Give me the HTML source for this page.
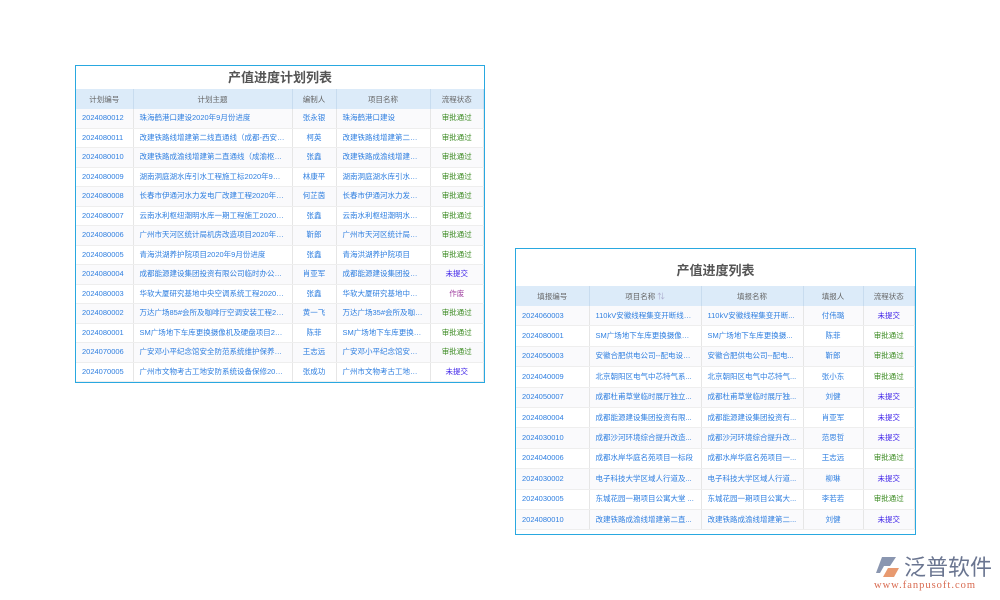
<!DOCTYPE html>
<html><head><meta charset="utf-8"><style>
body{margin:0;width:1000px;height:600px;background:#fff;position:relative;font-family:"Liberation Sans","Noto Sans CJK SC",sans-serif;overflow:hidden}
.t{position:absolute;border:1px solid #29a8e0;background:#fff;box-sizing:border-box;overflow:hidden}
.t h1{margin:0;text-align:center;font-size:13px;color:#555;font-weight:bold}
table{border-collapse:collapse;width:100%;table-layout:fixed}
th{background:#dcebf9;color:#666;font-weight:normal;font-size:7.5px;border-right:1px solid #c8dcef;padding:0}
td{font-size:7.5px;color:#2f7fe0;white-space:nowrap;overflow:hidden;text-overflow:ellipsis;border-right:1px solid #e6e6e6;border-bottom:1px solid #eee;padding:0 6px;line-height:10px}
tr:nth-child(even) td{background:#fafafc}
.a td{height:18.5px}
.b td{height:19.4px}
.c{text-align:center}
.g{color:#3a8a20;text-align:center}.p{color:#3a1ee8;text-align:center}.z{color:#a040a0;text-align:center}
</style></head><body>
<div class="t" style="left:75px;top:65px;width:410px;height:318px">
<h1 style="height:23px;line-height:23px">产值进度计划列表</h1>
<table class="a"><colgroup><col style="width:57px"><col style="width:159px"><col style="width:44px"><col style="width:94px"><col></colgroup>
<tr style="height:20px"><th>计划编号</th><th>计划主题</th><th>编制人</th><th>项目名称</th><th>流程状态</th></tr>
<tr><td>2024080012</td><td>珠海鹤港口建设2020年9月份进度</td><td class="c">张永银</td><td>珠海鹤港口建设</td><td class="g">审批通过</td></tr>
<tr><td>2024080011</td><td>改建铁路线增建第二线直通线（成都-西安）电...</td><td class="c">柯英</td><td>改建铁路线增建第二线直...</td><td class="g">审批通过</td></tr>
<tr><td>2024080010</td><td>改建铁路成渝线增建第二直通线（成渝枢纽）...</td><td class="c">张鑫</td><td>改建铁路成渝线增建第二...</td><td class="g">审批通过</td></tr>
<tr><td>2024080009</td><td>湖南洞庭湖水库引水工程施工标2020年9月份...</td><td class="c">林康平</td><td>湖南洞庭湖水库引水工程...</td><td class="g">审批通过</td></tr>
<tr><td>2024080008</td><td>长春市伊通河水力发电厂改建工程2020年8月...</td><td class="c">何芷茵</td><td>长春市伊通河水力发电厂...</td><td class="g">审批通过</td></tr>
<tr><td>2024080007</td><td>云南水利枢纽潮明水库一期工程施工2020年8...</td><td class="c">张鑫</td><td>云南水利枢纽潮明水库一...</td><td class="g">审批通过</td></tr>
<tr><td>2024080006</td><td>广州市天河区统计局机房改造项目2020年9月...</td><td class="c">靳郎</td><td>广州市天河区统计局机房...</td><td class="g">审批通过</td></tr>
<tr><td>2024080005</td><td>青海洪湖养护院项目2020年9月份进度</td><td class="c">张鑫</td><td>青海洪湖养护院项目</td><td class="g">审批通过</td></tr>
<tr><td>2024080004</td><td>成都能源建设集团投资有限公司临时办公场所...</td><td class="c">肖亚军</td><td>成都能源建设集团投资有...</td><td class="p">未提交</td></tr>
<tr><td>2024080003</td><td>华软大厦研究基地中央空调系统工程2020年9...</td><td class="c">张鑫</td><td>华软大厦研究基地中央空...</td><td class="z">作废</td></tr>
<tr><td>2024080002</td><td>万达广场85#会所及咖啡厅空调安装工程2020...</td><td class="c">黄一飞</td><td>万达广场35#会所及咖啡...</td><td class="g">审批通过</td></tr>
<tr><td>2024080001</td><td>SM广场地下车库更换摄像机及硬盘项目2020...</td><td class="c">陈菲</td><td>SM广场地下车库更换摄...</td><td class="g">审批通过</td></tr>
<tr><td>2024070006</td><td>广安邓小平纪念馆安全防范系统维护保养项目...</td><td class="c">王志远</td><td>广安邓小平纪念馆安全防...</td><td class="g">审批通过</td></tr>
<tr><td>2024070005</td><td>广州市文物考古工地安防系统设备保修2020年...</td><td class="c">张成功</td><td>广州市文物考古工地安防...</td><td class="p">未提交</td></tr>
</table></div>

<div class="t" style="left:515px;top:248px;width:401px;height:287px">
<h1 style="height:37px;line-height:44px">产值进度列表</h1>
<table class="b"><colgroup><col style="width:73px"><col style="width:112px"><col style="width:102px"><col style="width:60px"><col></colgroup>
<tr style="height:20px"><th>填报编号</th><th>项目名称 <span style="color:#aac">⇅</span></th><th>填报名称</th><th>填报人</th><th>流程状态</th></tr>
<tr><td>2024060003</td><td>110kV安徽线程集变开断线路...</td><td>110kV安徽线程集变开断...</td><td class="c">付伟璐</td><td class="p">未提交</td></tr>
<tr><td>2024080001</td><td>SM广场地下车库更换摄像机...</td><td>SM广场地下车库更换摄...</td><td class="c">陈菲</td><td class="g">审批通过</td></tr>
<tr><td>2024050003</td><td>安徽合肥供电公司--配电设备...</td><td>安徽合肥供电公司--配电...</td><td class="c">靳郎</td><td class="g">审批通过</td></tr>
<tr><td>2024040009</td><td>北京朝阳区电气中芯特气系...</td><td>北京朝阳区电气中芯特气...</td><td class="c">张小东</td><td class="g">审批通过</td></tr>
<tr><td>2024050007</td><td>成都杜甫草堂临时展厅独立...</td><td>成都杜甫草堂临时展厅独...</td><td class="c">刘健</td><td class="p">未提交</td></tr>
<tr><td>2024080004</td><td>成都能源建设集团投资有限...</td><td>成都能源建设集团投资有...</td><td class="c">肖亚军</td><td class="p">未提交</td></tr>
<tr><td>2024030010</td><td>成都沙河环境综合提升改造...</td><td>成都沙河环境综合提升改...</td><td class="c">范思哲</td><td class="p">未提交</td></tr>
<tr><td>2024040006</td><td>成都水岸华庭名苑项目一标段</td><td>成都水岸华庭名苑项目一...</td><td class="c">王志远</td><td class="g">审批通过</td></tr>
<tr><td>2024030002</td><td>电子科技大学区域人行道及...</td><td>电子科技大学区域人行道...</td><td class="c">柳琳</td><td class="p">未提交</td></tr>
<tr><td>2024030005</td><td>东城花园一期项目公寓大堂 ...</td><td>东城花园一期项目公寓大...</td><td class="c">李若若</td><td class="g">审批通过</td></tr>
<tr><td>2024080010</td><td>改建铁路成渝线增建第二直...</td><td>改建铁路成渝线增建第二...</td><td class="c">刘健</td><td class="p">未提交</td></tr>
</table></div>

<div style="position:absolute;left:872px;top:552px;width:128px;height:44px">
<svg width="28" height="22" style="position:absolute;left:2px;top:4px" viewBox="0 0 26 22"><path d="M7 1h14l-6 9H9l-4 7H1z" fill="#8a96b0"/><path d="M13 12h11l-5 9H8z" fill="#e89a70"/></svg>
<div style="position:absolute;left:32px;top:-2px;font-size:22px;color:#6a7590;letter-spacing:0px;font-family:'Noto Sans CJK SC',sans-serif">泛普软件</div>
<div style="position:absolute;left:2px;top:28px;font-size:10.5px;color:#d86a50;font-family:'Liberation Serif',serif;letter-spacing:1px">www.fanpusoft.com</div>
</div>
</body></html>
